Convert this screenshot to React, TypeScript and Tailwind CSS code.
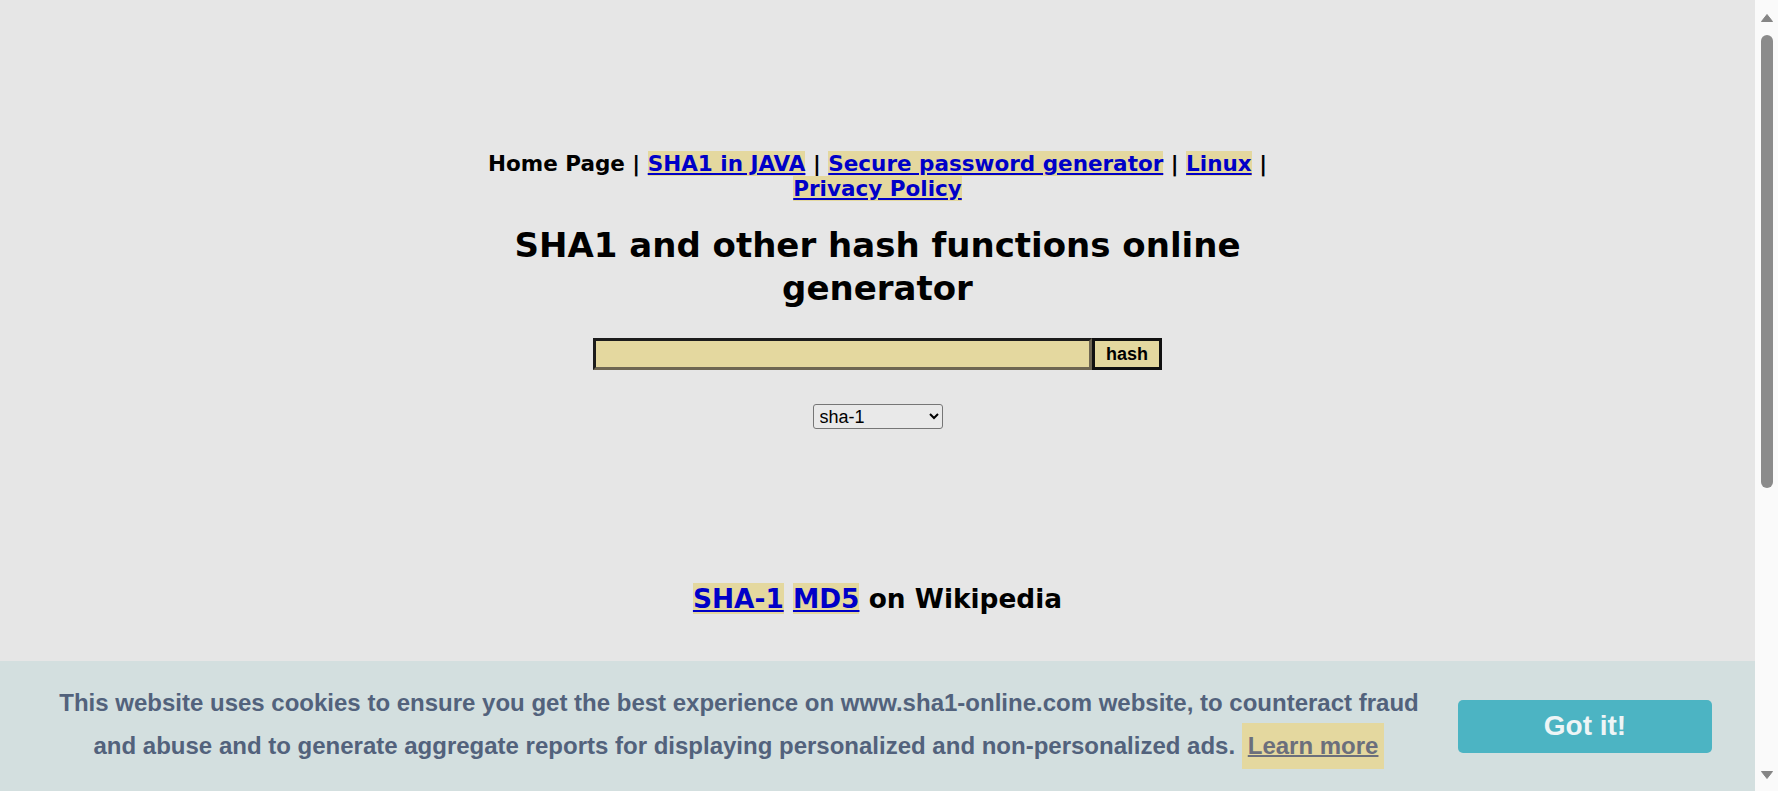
import React from 'react';

const Hl = ({ children }: { children: React.ReactNode }) => (
  <a href="#" className="bg-[#e4d89f] text-[#0000c8] underline decoration-2 underline-offset-2">
    {children}
  </a>
);

const Scrollbar = () => (
  <div className="flex w-[23px] shrink-0 flex-col items-center bg-[#fafafa] pt-[11px] pb-[9px]">
    <svg width="14" height="14" viewBox="0 0 14 14">
      <path d="M1.5 10.5 L7 3.5 L12.5 10.5 Z" fill="#858585" stroke="#858585" strokeLinejoin="round" />
    </svg>
    <div className="mt-[10px] h-[453px] w-[12px] rounded-full bg-[#8b8b8b]" />
    <div className="flex-1" />
    <svg width="14" height="14" viewBox="0 0 14 14">
      <path d="M1.5 3.5 L7 10.5 L12.5 3.5 Z" fill="#858585" stroke="#858585" strokeLinejoin="round" />
    </svg>
  </div>
);

const App = () => {
  return (
    <div className="flex h-screen overflow-hidden bg-[#e6e6e6] font-['DejaVu_Sans',Verdana,sans-serif] text-black">
      <div className="flex min-w-0 flex-1 flex-col">
        <main className="flex-1 overflow-hidden pt-[151px]">
          <div className="mx-auto w-[800px] text-center font-bold">
            {/* Top nav */}
            <div className="text-[21.5px] leading-[25px]">
              Home Page | <Hl>SHA1 in JAVA</Hl> | <Hl>Secure password generator</Hl> | <Hl>Linux</Hl> |{' '}
              <Hl>Privacy Policy</Hl>
            </div>

            <h1 className="mt-[23px] text-[34px] leading-[43px]">SHA1 and other hash functions online generator</h1>

            {/* Hash form */}
            <div className="mt-[28px] flex justify-center font-['Liberation_Sans',Arial,sans-serif]">
              <input
                type="text"
                className="h-[32px] w-[499px] border-[3px] border-t-[#1c1c1c] border-l-[#1c1c1c] border-b-[#6e6652] border-r-[#6e6652] bg-[#e4d89f] outline-none"
              />
              <button className="h-[32px] w-[70px] border-[3px] border-[#111] bg-[#e4d89f] text-[18px] font-bold leading-none text-black">
                hash
              </button>
            </div>

            <div className="mt-[34px] flex justify-center">
              <select className="h-[25px] w-[130px] rounded-[3px] border border-[#767676] bg-[#e9e9e9] px-[2px] font-['Liberation_Sans',Arial,sans-serif] text-[18px] font-normal text-black">
                <option>sha-1</option>
                <option>md5</option>
                <option>sha-256</option>
              </select>
            </div>

            <div className="mt-[154px] text-[26.4px] leading-[32px]">
              <Hl>SHA-1</Hl> <Hl>MD5</Hl> on Wikipedia
            </div>
          </div>
        </main>

        {/* Cookie banner */}
        <div className="flex h-[130px] shrink-0 items-center gap-[23px] bg-[#d3dfdf] px-[43px] font-['Liberation_Sans',Arial,sans-serif] font-bold">
          <p className="flex-1 text-center text-[24px] leading-[40px] text-[#52627c]">
            This website uses cookies to ensure you get the best experience on www.sha1-online.com website, to counteract
            fraud and abuse and to generate aggregate reports for displaying personalized and non-personalized ads.{' '}
            <a href="#" className="inline-block bg-[#e4d89f] px-[6px] py-[5px] leading-[36px] text-[#6b6f7c] underline decoration-2">
              Learn more
            </a>
          </p>
          <button className="h-[53px] w-[254px] shrink-0 rounded-[5px] bg-[#4cb4c3] text-[28px] text-[#eef5f6]">Got it!</button>
        </div>
      </div>

      <Scrollbar />
    </div>
  );
};

export default App;
